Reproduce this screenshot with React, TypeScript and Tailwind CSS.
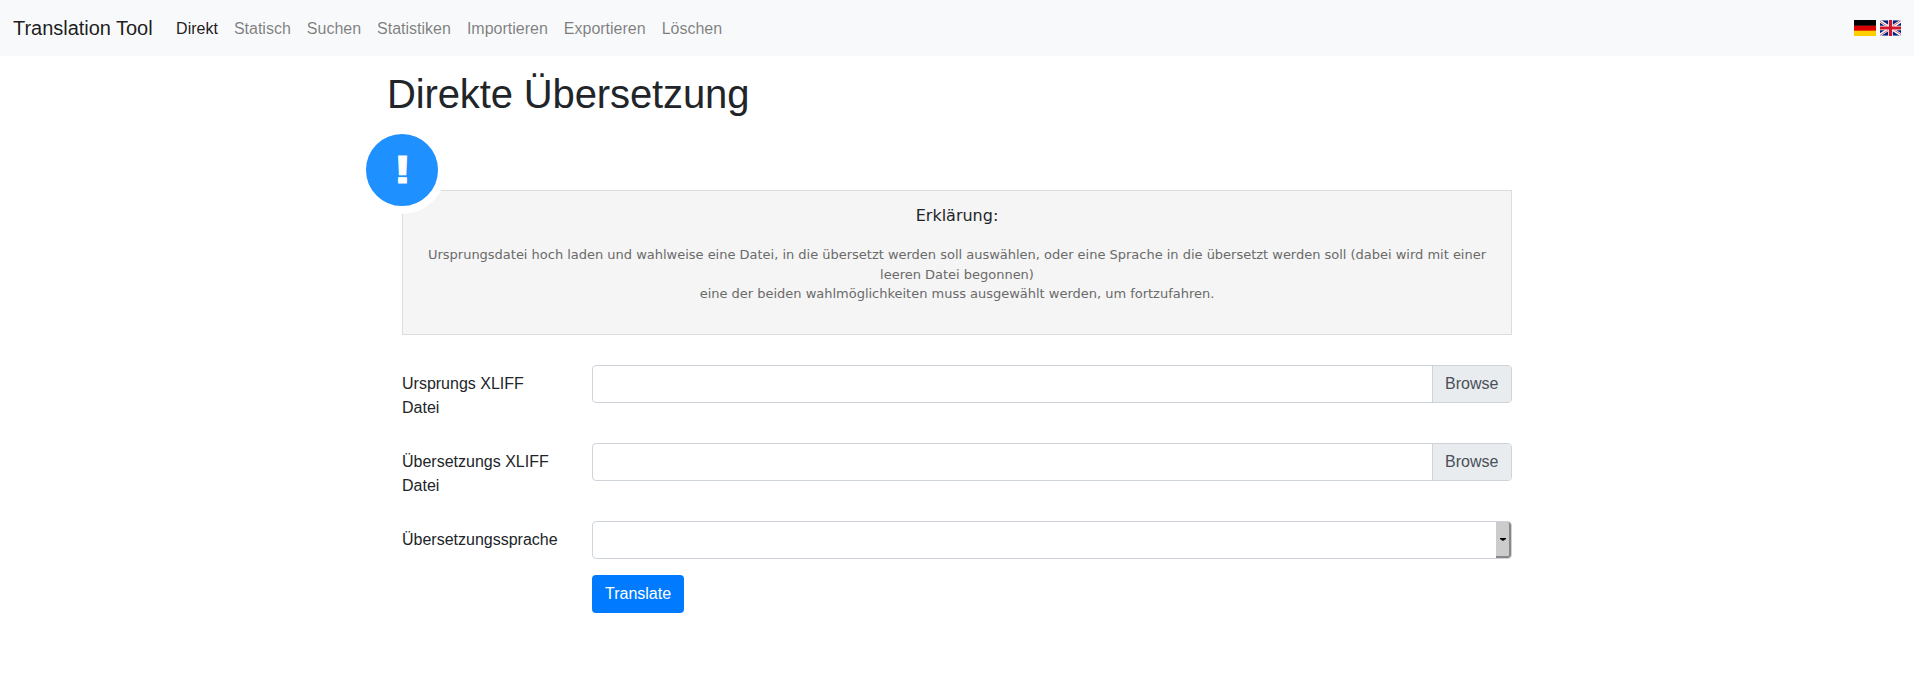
const links = [
  { name: 'Direkt', style: 'px-2 text-black/90' },
  { name: 'Statisch', style: 'px-2 text-black/50' },
  { name: 'Suchen', style: 'px-2 text-black/50' },
  { name: 'Statistiken', style: 'px-2 text-black/50' },
  { name: 'Importieren', style: 'px-2 text-black/50' },
  { name: 'Exportieren', style: 'px-2 text-black/50' },
  { name: 'Löschen', style: 'px-2 text-black/50' },
];

function GermanFlag() {
  return (
    <svg width="22" height="16" viewBox="0 0 22 16" shapeRendering="crispEdges" aria-label="Deutsch">
      <rect width="22" height="16" fill="#ffce00" />
      <rect width="22" height="11" fill="#dd0000" />
      <rect width="22" height="5" fill="#000000" />
      <rect y="5" width="22" height="1" fill="#4a1210" />
      <rect y="10" width="22" height="1" fill="#e64500" />
    </svg>
  );
}

function BritishFlag() {
  return (
    <svg width="21" height="16" viewBox="0 0 21 16" aria-label="English">
      <rect width="21" height="16" fill="#00247d" />
      <path d="M0 1L21 15M21 1L0 15" stroke="#ffffff" strokeWidth="2.8" />
      <path d="M0 1.4L9 7.4M21 14.6L12 8.6M21 .6L12 6.6M0 15.4L9 9.4" stroke="#cf142b" strokeWidth="1" strokeOpacity=".7" />
      <path d="M10.5 0V16M0 8H21" stroke="#ffffff" strokeWidth="4.6" />
      <path d="M10.5 0V16M0 8H21" stroke="#cf142b" strokeWidth="3" />
      <path d="M0 .5H9M12 .5H21M0 15.5H9M12 15.5H21" stroke="#ffffff" strokeWidth="1" strokeOpacity=".4" />
    </svg>
  );
}

function FileField({ label }: { label: string }) {
  return (
    <div className="mb-4 flex">
      <label className="w-[190px] shrink-0 py-[7px] pr-[30px]">{label}</label>
      <div className="flex h-[38px] grow overflow-hidden rounded border border-[#ced4da] bg-white">
        <div className="grow" />
        <div className="w-[79px] shrink-0 border-l border-[#ced4da] bg-[#e9ecef] pt-[6px] pl-3 text-[#495057]">Browse</div>
      </div>
    </div>
  );
}

export default function App() {
  return (
    <div className="min-h-[678px] bg-white font-['Liberation_Sans',Arial,sans-serif] text-base leading-6 text-[#212529]">
      <nav className="flex h-14 items-center bg-[#f8f9fa] px-[13px]">
        <span className="mr-[15.5px] text-xl leading-[30px] tracking-[-0.03px] text-black/90">Translation Tool</span>
        <ul className="flex grow pt-0.5">
          {links.map((link) => (
            <li key={link.name} className={link.style}>
              {link.name}
            </li>
          ))}
        </ul>
        <div className="flex gap-1">
          <GermanFlag />
          <BritishFlag />
        </div>
      </nav>
      <main className="mx-auto w-[1140px] pt-[14px]">
        <h1 className="text-[40px] leading-[48px] tracking-[-0.12px]">Direkte Übersetzung</h1>
        <div className="px-[15px]">
          <section className="relative mt-[72px] h-[145px] border border-[#dddddd] bg-[#f5f5f5] px-5 pt-[13px] text-center font-['DejaVu_Sans',sans-serif]">
            <div className="absolute -left-[45px] -top-[65px] flex size-[88px] items-center justify-center rounded-full border-8 border-white bg-[#1e90ff] pb-0.5 font-['Liberation_Sans',Arial,sans-serif] text-[39px] leading-none font-bold text-white">
              <span className="inline-block scale-x-[1.35] [-webkit-text-stroke:1px_white]">!</span>
            </div>
            <h2 className="text-base leading-6">Erklärung:</h2>
            <p className="mt-[17px] text-[13px] leading-[19.5px] tracking-[-0.013px] text-[#6a6a6a]">
              Ursprungsdatei hoch laden und wahlweise eine Datei, in die übersetzt werden soll auswählen, oder eine
              Sprache in die übersetzt werden soll (dabei wird mit einer leeren Datei begonnen)
              <br />
              eine der beiden wahlmöglichkeiten muss ausgewählt werden, um fortzufahren.
            </p>
          </section>
          <form className="mt-[30px]">
            <FileField label="Ursprungs XLIFF Datei" />
            <FileField label="Übersetzungs XLIFF Datei" />
            <div className="mb-4 flex">
              <label className="w-[190px] shrink-0 py-[7px]">Übersetzungssprache</label>
              <div className="flex h-[38px] grow justify-end overflow-hidden rounded border border-[#ced4da] bg-white">
                <div className="flex w-[15px] items-center justify-center rounded-r-[3px] border-r-2 border-b-2 border-[#888888] bg-[#cccccc]">
                  <svg width="6" height="3" viewBox="0 0 6 3">
                    <path d="M0 0H6V1L3 3L0 1Z" fill="#000000" />
                  </svg>
                </div>
              </div>
            </div>
            <button type="button" className="ml-[190px] block h-[38px] rounded bg-[#007bff] px-[13px] text-white">
              Translate
            </button>
          </form>
        </div>
      </main>
    </div>
  );
}
